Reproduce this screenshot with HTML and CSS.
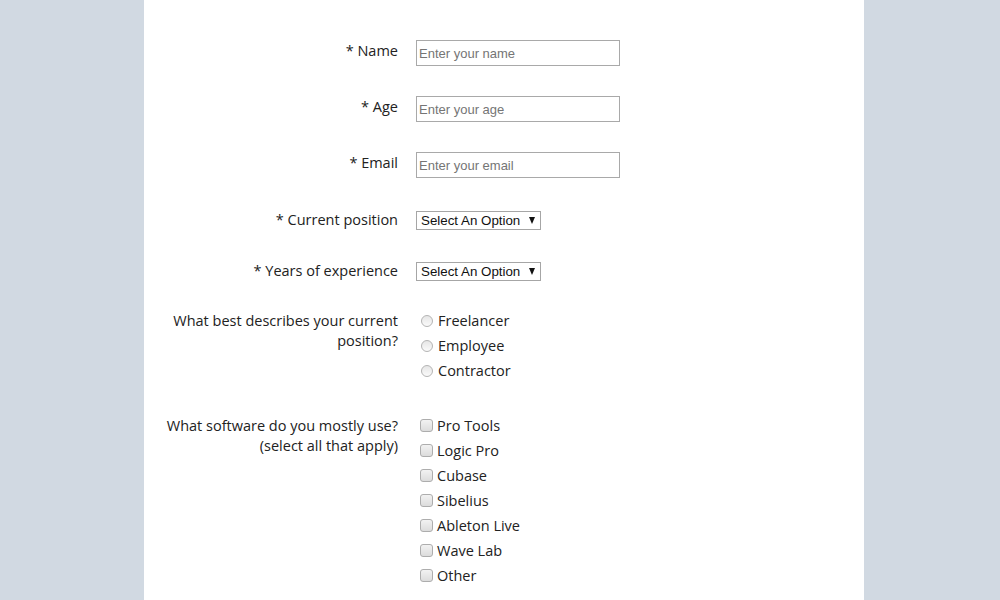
FILE: index.html
```html
<!DOCTYPE html>
<html lang="en">
<head>
<meta charset="utf-8">
<title>Survey Form</title>
<link rel="stylesheet" href="styles.css">
</head>
<body>
<main class="page">
  <form class="form">
    <div class="row row-text">
      <label class="label" for="name">* Name</label>
      <div class="field"><input class="text" id="name" type="text" placeholder="Enter your name"></div>
    </div>
    <div class="row row-text">
      <label class="label" for="age">* Age</label>
      <div class="field"><input class="text" id="age" type="text" placeholder="Enter your age"></div>
    </div>
    <div class="row row-text row-last-text">
      <label class="label" for="email">* Email</label>
      <div class="field"><input class="text" id="email" type="text" placeholder="Enter your email"></div>
    </div>
    <div class="row row-select">
      <label class="label" for="pos">* Current position</label>
      <div class="field"><span class="select-wrap"><select class="select" id="pos"><option>Select An Option</option></select></span></div>
    </div>
    <div class="row row-select row-last-select">
      <label class="label" for="years">* Years of experience</label>
      <div class="field"><span class="select-wrap"><select class="select" id="years"><option>Select An Option</option></select></span></div>
    </div>
    <div class="row row-group row-radios">
      <div class="label label-multi">What best describes your current position?</div>
      <div class="field options">
        <label class="option"><span class="radio"></span>Freelancer</label>
        <label class="option"><span class="radio"></span>Employee</label>
        <label class="option"><span class="radio"></span>Contractor</label>
      </div>
    </div>
    <div class="row row-group">
      <div class="label label-multi">What software do you mostly use?<br>(select all that apply)</div>
      <div class="field options">
        <label class="option"><span class="check"></span>Pro Tools</label>
        <label class="option"><span class="check"></span>Logic Pro</label>
        <label class="option"><span class="check"></span>Cubase</label>
        <label class="option"><span class="check"></span>Sibelius</label>
        <label class="option"><span class="check"></span>Ableton Live</label>
        <label class="option"><span class="check"></span>Wave Lab</label>
        <label class="option"><span class="check"></span>Other</label>
      </div>
    </div>
  </form>
</main>
</body>
</html>
```
FILE: styles.css
```css
html, body {
  margin: 0;
  padding: 0;
}
body {
  background: #d1d9e2;
  font-family: "Open Sans", "Noto Sans", sans-serif;
  color: #222;
  padding-left: 8px;
}
.page {
  width: 720px;
  min-height: 600px;
  margin: 0 auto;
  background: #fff;
}
.form {
  padding-top: 40px;
}
.row {
  display: grid;
  grid-template-columns: 254px 1fr;
  column-gap: 18px;
}
.field {
  display: flex;
}
.label {
  text-align: right;
  font-size: 14.5px;
  line-height: 20px;
  color: #222;
}
.row-text {
  height: 26px;
  margin-bottom: 30px;
  align-items: start;
}
.row-text .label {
  padding-top: 1px;
}
.row-last-text {
  margin-bottom: 32px;
}
.row-select {
  height: 19px;
  margin-bottom: 32px;
  align-items: center;
}
.row-last-select {
  margin-bottom: 28px;
}
.row-radios {
  margin-bottom: 30px;
}
.label-multi {
  padding-top: 3px;
  padding-left: 10px;
}
.text {
  box-sizing: border-box;
  width: 204px;
  height: 26px;
  margin: 0;
  border: 1px solid #a9a9a9;
  padding: 0 2px;
  font-family: "Liberation Sans", Arial, sans-serif;
  font-size: 13px;
  color: #333;
  outline: none;
}
.text::placeholder {
  color: #757575;
}
.select-wrap {
  position: relative;
  display: block;
}
.select-wrap::after {
  content: "";
  position: absolute;
  right: 6px;
  top: 6px;
  width: 0;
  height: 0;
  border-left: 3.5px solid transparent;
  border-right: 3.5px solid transparent;
  border-top: 7px solid #111;
  pointer-events: none;
}
.select {
  appearance: none;
  -webkit-appearance: none;
  box-sizing: border-box;
  width: 125px;
  height: 19px;
  margin: 0;
  display: block;
  border: 1px solid #a6a6a6;
  border-radius: 0;
  background: #fff;
  padding: 0 0 0 4px;
  font-family: "Liberation Sans", Arial, sans-serif;
  font-size: 13.33px;
  line-height: 17px;
  color: #111;
}
.options {
  display: flex;
  flex-direction: column;
}
.option {
  display: flex;
  align-items: center;
  height: 25px;
  font-size: 14.5px;
  color: #222;
}
.radio {
  box-sizing: border-box;
  width: 12px;
  height: 12px;
  border-radius: 50%;
  border: 1px solid #b4b4b4;
  background: linear-gradient(#e6e6e6, #fafafa);
  margin: 0 5px 0 5px;
}
.check {
  box-sizing: border-box;
  width: 13px;
  height: 13px;
  border-radius: 3px;
  border: 1px solid #adadad;
  background: linear-gradient(#f2f2f2, #dcdcdc);
  margin: 0 4px 0 4px;
}
```
